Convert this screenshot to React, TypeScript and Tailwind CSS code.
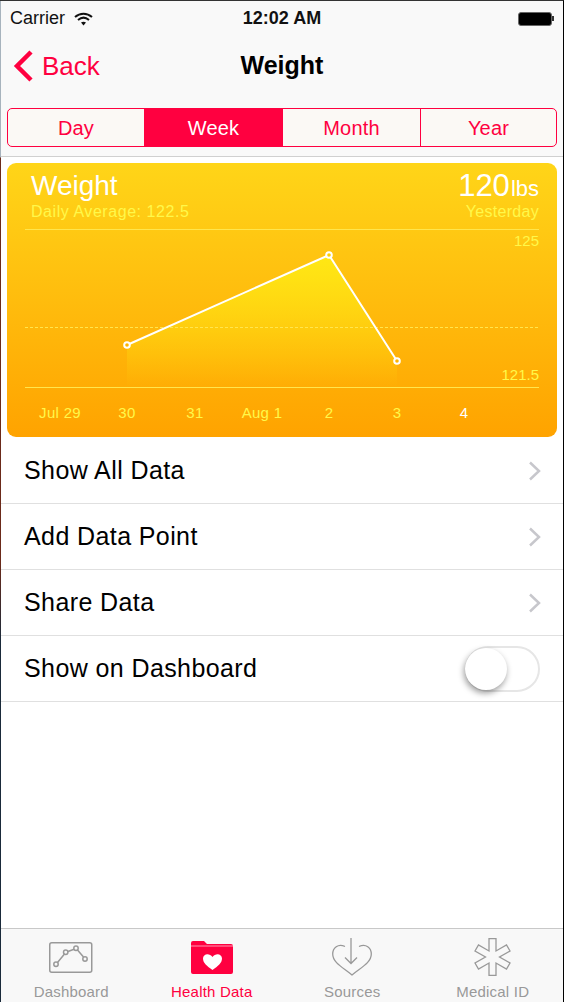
const sans = "font-['Liberation_Sans',Arial,sans-serif]";

function Chevron() {
  return (
    <svg width="14" height="20" viewBox="0 0 14 20" fill="none" stroke="#c7c7cc" strokeWidth="2.5">
      <path d="M2 1.5 L11 10 L2 18.5" />
    </svg>
  );
}

function Row({ label }: { label: string }) {
  return (
    <div className="flex h-[66px] items-center justify-between border-b border-[#e0e0e0] pl-[23px] pr-[21px]">
      <span className="text-[25px] tracking-[0.4px] text-black">{label}</span>
      <Chevron />
    </div>
  );
}

function Tab({ label, active, children }: { label: string; active?: boolean; children: React.ReactNode }) {
  return (
    <div className="flex flex-1 flex-col items-center">
      <div className="flex h-[54px] items-center pb-[7px] pt-[9px]">{children}</div>
      <span className={`text-[15px] leading-[18px] tracking-[0.2px] ${active ? "text-[#ff0040]" : "text-[#999]"}`}>{label}</span>
    </div>
  );
}

const segments = [
  { label: "Day", cls: "w-[136px]" },
  { label: "Week", cls: "w-[139px] bg-[#ff0040] text-white" },
  { label: "Month", cls: "w-[137px]" },
  { label: "Year", cls: "flex-1 border-l border-[#ff0040]" },
];

const days: [string, number][] = [
  ["Jul 29", 52],
  ["30", 119],
  ["31", 187],
  ["Aug 1", 254],
  ["2", 321],
  ["3", 389],
  ["4", 456],
];

export default function App() {
  return (
    <div className={`${sans} flex h-[1002px] w-[564px] overflow-hidden border-r border-t border-r-black border-t-[#333] bg-white`}>
      {/* desktop showing through at the window's left edge */}
      <div className="w-px shrink-0 bg-[linear-gradient(#a7b3bd_0,#a7b3bd_156px,#6b2a1a_157px,#6b2a1a_560px,#1a2a3a_640px,#1a2a3a_100%)]" />
      <div className="flex min-w-0 flex-1 flex-col">
        <div className="bg-[#f9f9f9]">
          <div className="flex h-[35px] items-center justify-between pl-[9px] pr-[9px] text-[#111]">
            <div className="flex w-[150px] items-center gap-[9px]">
              <span className="text-[18px]">Carrier</span>
              <svg width="19" height="14" viewBox="0 0 19 14" fill="none" stroke="#111" strokeWidth="2">
                <path d="M1 5 C6 0.5 13 0.5 18 5" />
                <path d="M4 8 C7.5 5 11.5 5 15 8" />
                <path d="M9.5 13.5 L7 10.5 C8.5 9.5 10.5 9.5 12 10.5 Z" fill="#111" stroke="none" />
              </svg>
            </div>
            <span className="text-[18px] font-bold">12:02 AM</span>
            <div className="flex w-[150px] items-center justify-end">
              <div className="h-[14px] w-[34px] rounded-[3px] border border-[#666] bg-black" />
              <div className="h-[5px] w-[2px] bg-[#333]" />
            </div>
          </div>
          <div className="flex h-[60px] items-center justify-between px-[12px]">
            <div className="flex w-[150px] items-center gap-[9px]">
              <svg width="20" height="32" viewBox="0 0 20 32" fill="none" stroke="#ff0040" strokeWidth="4.5">
                <path d="M18 2 L4 16 L18 30" />
              </svg>
              <span className="text-[26px] text-[#ff0040]">Back</span>
            </div>
            <span className="text-[25px] font-bold text-black">Weight</span>
            <div className="w-[150px]" />
          </div>
          <div className="border-b border-[#d0d0d0] px-[6px] pb-[9px] pt-[12px]">
            <div className="flex h-[39px] overflow-hidden rounded-[5px] border-[1.5px] border-[#ff0040] bg-[#fbf9f5] text-[20px] tracking-[0.2px] text-[#ff0040]">
              {segments.map((s) => (
                <div key={s.label} className={`flex items-center justify-center ${s.cls}`}>
                  {s.label}
                </div>
              ))}
            </div>
          </div>
        </div>

        <div className="px-[6px] pb-[1px] pt-[6px]">
          <div className="relative h-[274px] rounded-[9px] bg-gradient-to-b from-[#ffd518] to-[#ffa300] text-[#fff84a]">
            <div className="flex items-start justify-between pl-[24px] pr-[18px] pt-[7px]">
              <div>
                <div className="text-[28px] leading-[32px] text-white">Weight</div>
                <div className="text-[16px] leading-[20px] tracking-[0.55px]">Daily Average: 122.5</div>
              </div>
              <div className="flex flex-col items-end">
                <div className="flex h-[32px] items-baseline gap-[1px] text-white">
                  <span className="text-[31px] leading-[32px]">120</span>
                  <span className="text-[22px] leading-[32px]">lbs</span>
                </div>
                <div className="text-[16px] leading-[20px] tracking-[0.3px]">Yesterday</div>
              </div>
            </div>
            <svg className="absolute left-0 top-0" width="550" height="274" viewBox="0 0 550 274" fill="none">
              <defs>
                <linearGradient id="fill" x1="0" y1="0" x2="0" y2="1">
                  <stop offset="0" stopColor="#ffe814" />
                  <stop offset="1" stopColor="#ffe814" stopOpacity="0" />
                </linearGradient>
              </defs>
              <path d="M120 182 L322 92 L390 198 L390 224 L120 224 Z" fill="url(#fill)" />
              <path d="M18 66.5 H532 M18 224.5 H532" stroke="#ffe64d" />
              <path d="M18 164.5 H532" stroke="#ffe64d" strokeDasharray="3 2" />
              <path d="M120 182 L322 92 L390 198" stroke="#fff" strokeWidth="2" />
              <circle cx="120" cy="182" r="2.8" fill="#ffb400" stroke="#fff" strokeWidth="2" />
              <circle cx="322" cy="92" r="2.8" fill="#ffd000" stroke="#fff" strokeWidth="2" />
              <circle cx="390" cy="198" r="2.8" fill="#ffb400" stroke="#fff" strokeWidth="2" />
            </svg>
            <span className="absolute right-[18px] top-[69px] text-[15px] leading-[18px]">125</span>
            <span className="absolute right-[18px] top-[203px] text-[15px] leading-[18px]">121.5</span>
            {days.map(([t, x]) => (
              <span
                key={t}
                className={`absolute top-[241px] -translate-x-1/2 text-[15px] leading-[18px] tracking-[0.3px] ${t === "4" ? "text-white" : ""}`}
                style={{ left: x + 1 }}
              >
                {t}
              </span>
            ))}
          </div>
        </div>

        <div>
          <Row label="Show All Data" />
          <Row label="Add Data Point" />
          <Row label="Share Data" />
          <div className="flex h-[66px] items-center justify-between border-b border-[#e0e0e0] pl-[23px] pr-[23px]">
            <span className="text-[25px] tracking-[0.4px] text-black">Show on Dashboard</span>
            <div className="relative h-[46px] w-[75px] rounded-full border-2 border-[#e6e6e6]">
              <div className="absolute -left-[2px] top-0 size-[42px] rounded-full bg-white shadow-[-1px_3px_6px_rgba(0,0,0,0.4)]" />
            </div>
          </div>
        </div>

        <div className="flex-1" />

        <div className="flex h-[74px] border-t border-[#c8c8c8] bg-[#f8f8f8]">
          <Tab label="Dashboard">
            <svg width="44" height="31" viewBox="0 0 44 31" fill="none" stroke="#999" strokeWidth="1.5">
              <rect x="0.75" y="0.75" width="42" height="29.5" rx="2" />
              <path d="M8.5 20.5 L15.5 12 M19 9.5 L25 7.2 M28.5 8 L34.5 15" />
              <circle cx="7" cy="22.3" r="2.2" />
              <circle cx="16.7" cy="10.3" r="2.2" />
              <circle cx="27" cy="6.3" r="2.2" />
              <circle cx="36" cy="17" r="2.2" />
            </svg>
          </Tab>
          <Tab label="Health Data" active>
            <svg width="42" height="33" viewBox="0 0 42 33" fill="#ff0040">
              <path d="M0 2 Q0 0 2 0 H13 L16 3 H40 Q42 3 42 5 V31 Q42 33 40 33 H2 Q0 33 0 31 Z" />
              <path d="M0 5 H42" stroke="#fff" strokeWidth="0.6" />
              <path d="M21.5 29 C16 25 12 22 12 17.5 C12 12.5 18.5 11.5 21.5 16 C24.5 11.5 31 12.5 31 17.5 C31 22 27 25 21.5 29 Z" fill="#fff" />
            </svg>
          </Tab>
          <Tab label="Sources">
            <svg width="40" height="38" viewBox="0 0 40 38" fill="none" stroke="#999" strokeWidth="1.3">
              <path d="M13 8.5 C6 5 0.7 10 0.7 16 C0.7 25 12 30 20 37 C28 30 39.3 25 39.3 16 C39.3 10 34 5 27 8.5" />
              <path d="M19 0 V25.5 M13 19.5 L19 25.5 L25 19.5" />
            </svg>
          </Tab>
          <Tab label="Medical ID">
            <svg width="37" height="38" viewBox="0 0 37 38" fill="none" stroke="#999" strokeWidth="1.3">
              <path d="M15 0.7 H22 V13 L32.5 7 L36 13 L25.5 19 L36 25 L32.5 31 L22 25 V37.3 H15 V25 L4.5 31 L1 25 L11.5 19 L1 13 L4.5 7 L15 13 Z" />
            </svg>
          </Tab>
        </div>
      </div>
    </div>
  );
}
